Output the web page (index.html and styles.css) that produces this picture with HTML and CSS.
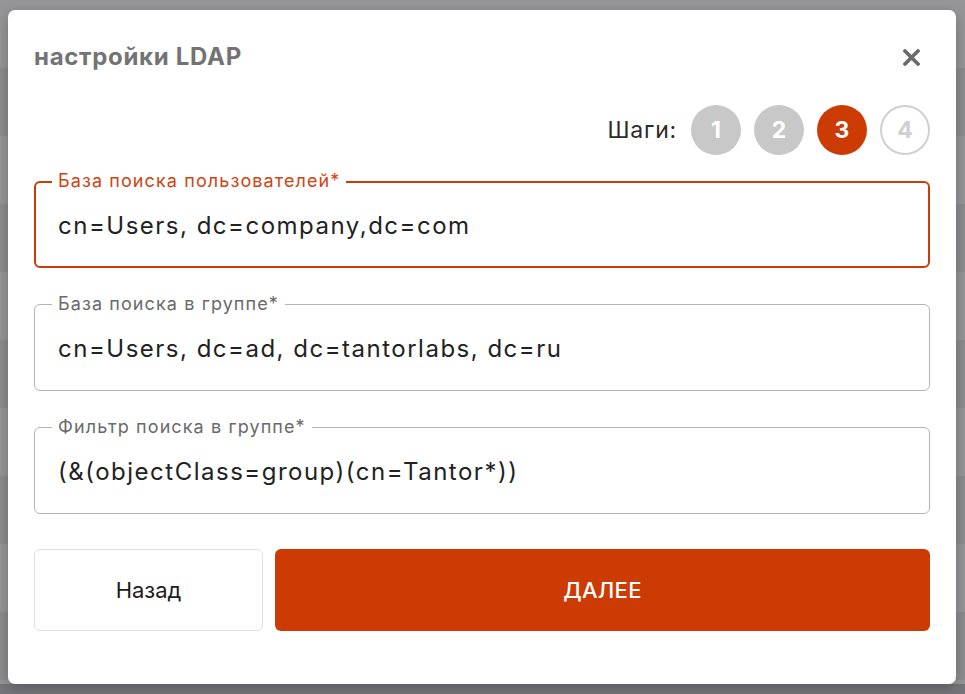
FILE: index.html
```html
<!DOCTYPE html>
<html lang="ru">
<head>
    <meta charset="UTF-8">
    <meta name="viewport" content="width=device-width, initial-scale=1.0">
    <title>настройки LDAP</title>
    <link rel="stylesheet" href="styles.css">
</head>
<body>
    <div class="backdrop">
        <div class="modal">
            <div class="modal-header">
                <h2 class="modal-title">настройки LDAP</h2>
                <button class="close-btn" type="button" aria-label="Закрыть">
                    <svg width="17" height="17" viewBox="0 0 17 17">
                        <path d="M2 2 L15 15 M15 2 L2 15" stroke="#6b6b6b" stroke-width="3.8" stroke-linecap="round"/>
                    </svg>
                </button>
            </div>

            <div class="steps">
                <span class="steps-label">Шаги:</span>
                <span class="step step-done">1</span>
                <span class="step step-done">2</span>
                <span class="step step-current">3</span>
                <span class="step step-next">4</span>
            </div>

            <div class="fields">
                <div class="field field-active">
                    <label class="field-label" for="users-base">База поиска пользователей*</label>
                    <input class="field-input" id="users-base" type="text" value="cn=Users, dc=company,dc=com">
                </div>
                <div class="field">
                    <label class="field-label" for="group-base">База поиска в группе*</label>
                    <input class="field-input" id="group-base" type="text" value="cn=Users, dc=ad, dc=tantorlabs, dc=ru">
                </div>
                <div class="field">
                    <label class="field-label" for="group-filter">Фильтр поиска в группе*</label>
                    <input class="field-input" id="group-filter" type="text" value="(&amp;(objectClass=group)(cn=Tantor*))">
                </div>
            </div>

            <div class="actions">
                <button class="btn btn-back" type="button">Назад</button>
                <button class="btn btn-next" type="button">Далее</button>
            </div>
        </div>
    </div>
</body>
</html>
```

FILE: styles.css
```css
/* общие переменные */
:root {
    --accent: #cc3b03;
    --text: #222222;
    --muted: #6e6e6e;
    --step-grey: #c8c8c8;
}

* {
    margin: 0;
    padding: 0;
    box-sizing: border-box;
}

body {
    font-family: "Inter", "Noto Sans", sans-serif;
    color: var(--text);
    background: #8f8f92;
}

/* фон за модальным окном - строки таблицы под затемнением */
.backdrop {
    min-height: 694px;
    padding: 10px 9px 10px 8px;
    background:
        linear-gradient(to bottom, transparent 684px, #76767a 684px),
        repeating-linear-gradient(to bottom, #969698 0, #969698 68px, #8d8d90 68px, #8d8d90 136px);
}

.modal {
    height: 674px;
    background: #ffffff;
    border-radius: 7px;
    padding: 0 26px;
    box-shadow: 0 4px 14px rgba(0, 0, 0, 0.25);
}

.modal-header {
    display: flex;
    align-items: center;
    justify-content: space-between;
    padding-top: 34px;
    height: 60px;
}

.modal-title {
    font-size: 24px;
    line-height: 26px;
    font-weight: 700;
    letter-spacing: 0.7px;
    color: #737373;
}

.close-btn {
    border: none;
    background: none;
    display: flex;
    margin-right: 10px;
    cursor: pointer;
}

/* шаги мастера */
.steps {
    display: flex;
    align-items: center;
    justify-content: flex-end;
    gap: 13px;
    margin-top: 35px;
}

.steps-label {
    font-size: 23px;
    letter-spacing: 0.8px;
    color: #2b2b2b;
    margin-right: 1px;
}

.step {
    width: 50px;
    height: 50px;
    border-radius: 50%;
    display: flex;
    align-items: center;
    justify-content: center;
    font-size: 23px;
    font-weight: 700;
    color: #ffffff;
}

.step-done {
    background: var(--step-grey);
}

.step-current {
    background: var(--accent);
}

.step-next {
    border: 2px solid #d0d0d0;
    color: #d0d0d0;
}

/* поля ввода */
.fields {
    display: flex;
    flex-direction: column;
    gap: 36px;
    margin-top: 26px;
}

.field {
    position: relative;
    height: 87px;
    border: 1px solid #b3b3b3;
    border-radius: 6px;
    display: flex;
    align-items: center;
    padding: 0 23px;
}

.field-active {
    border: 2px solid var(--accent);
    padding: 0 22px;
}

.field-label {
    position: absolute;
    top: -11px;
    left: 17px;
    padding: 0 6px;
    background: #ffffff;
    font-size: 18px;
    line-height: 20px;
    letter-spacing: 1.1px;
    color: #6a6a6a;
}

.field-active .field-label {
    top: -12px;
    left: 16px;
    color: #d04412;
}

.field-input {
    width: 100%;
    border: none;
    outline: none;
    background: transparent;
    font-family: inherit;
    font-size: 24px;
    letter-spacing: 1.5px;
    color: var(--text);
    padding-top: 2px;
}

/* кнопки */
.actions {
    display: flex;
    gap: 12px;
    margin-top: 35px;
}

.btn {
    height: 82px;
    border-radius: 6px;
    font-family: inherit;
    font-size: 22px;
    cursor: pointer;
}

.btn-back {
    width: 229px;
    background: #ffffff;
    border: 1px solid #e0e0e0;
    color: #1c1c1c;
}

.btn-next {
    flex: 1;
    background: var(--accent);
    border: none;
    color: #ffffff;
    font-weight: 500;
    letter-spacing: 0.3px;
    text-transform: uppercase;
}
```
